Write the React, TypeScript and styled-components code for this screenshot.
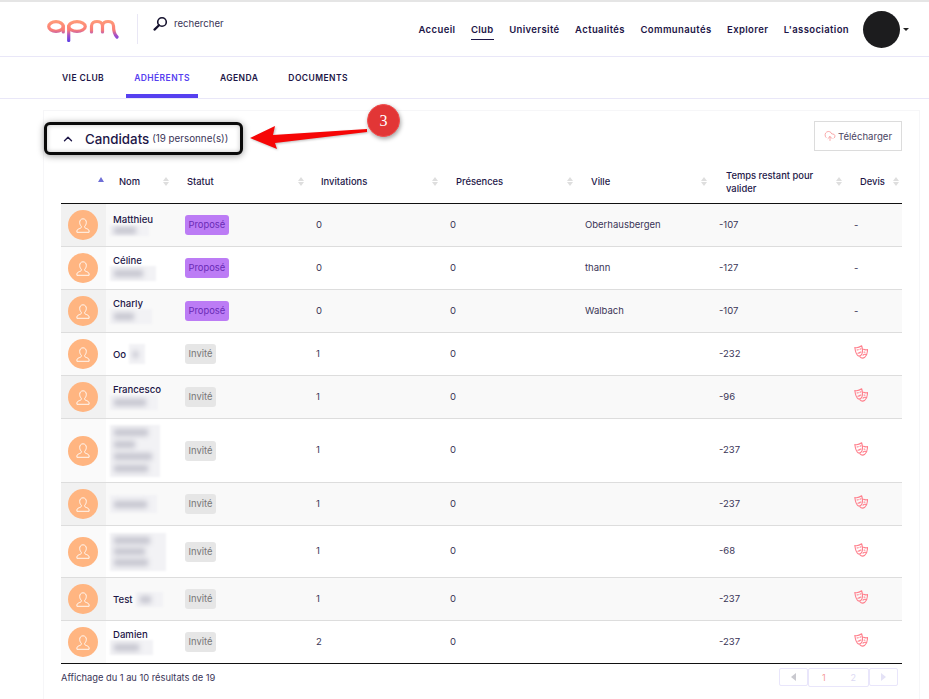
import React from "react";
import styled, { createGlobalStyle } from "styled-components";
import { ChevronUp, CloudUpload } from "lucide-react";

const Global = createGlobalStyle`
  html, body { margin: 0; padding: 0; background: #fff; }
  body { font-family: Inter, "Open Sans", sans-serif; color: #1d1647; }
  * { box-sizing: border-box; }
`;

const Page = styled.div`
  width: 929px;
  height: 699px;
  overflow: hidden;
  border-top: 2px solid #e5e5e5;
  display: flex;
  flex-direction: column;
`;

const Header = styled.header`
  height: 55px;
  flex: none;
  border-bottom: 1px solid #e9e7f8;
  display: flex;
  align-items: center;
  padding: 0 20px 0 47px;
`;

const LogoBox = styled.div`
  width: 91px;
  height: 30px;
  border-right: 1px solid #e9e7f5;
  display: flex;
  align-items: center;
  flex: none;
`;

const SearchBox = styled.div`
  display: flex;
  align-items: flex-start;
  gap: 6px;
  margin-left: 15px;
  height: 30px;
  font-size: 9.6px;
  color: #3a3557;
  padding-top: 2px;
`;

const SearchLabel = styled.span`
  line-height: 14px;
  margin-top: 1px;
`;

const Nav = styled.nav`
  margin-left: auto;
  display: flex;
  align-items: center;
  gap: 15.5px;
`;

const NavItem = styled.a<{ $active?: boolean }>`
  font-size: 9.5px;
  font-weight: 600;
  letter-spacing: 0.38px;
  color: #1d1647;
  padding: 4px 0;
  position: relative;
  top: 1px;
  border-bottom: 1px solid ${(p) => (p.$active ? "#1d1647" : "transparent")};
`;

const UserArea = styled.div`
  margin-left: 14px;
  display: flex;
  align-items: center;
  gap: 3px;
`;

const UserAvatar = styled.div`
  width: 37px;
  height: 37px;
  border-radius: 50%;
  background: #1c1c1e;
`;

const Caret = styled.span`
  width: 0;
  height: 0;
  border-left: 3px solid transparent;
  border-right: 3px solid transparent;
  border-top: 3px solid #222;
`;

const Tabs = styled.div`
  height: 42px;
  flex: none;
  border-bottom: 1px solid #e9e7f8;
  display: flex;
  padding-left: 54px;
`;

const Tab = styled.a<{ $active?: boolean }>`
  height: 41px;
  padding: 15px 8px 0;
  margin-right: 14px;
  font-size: 8.5px;
  font-weight: 600;
  letter-spacing: 0.42px;
  line-height: 12px;
  color: ${(p) => (p.$active ? "#5640f0" : "#1d1647")};
  border-bottom: 4px solid ${(p) => (p.$active ? "#5640f0" : "transparent")};
`;

const Card = styled.section`
  position: relative;
  margin: 11px 0 0 43px;
  width: 877px;
  flex: 1;
  border: 1px solid #f6f6f8;
  border-bottom: 0;
  padding: 0 17px;
`;

const CardTop = styled.div`
  display: flex;
  justify-content: space-between;
  align-items: flex-start;
  height: 49px;
  padding-top: 10px;
`;

const TitleBox = styled.div`
  margin-left: -17px;
  margin-top: 1px;
  width: 199px;
  height: 33px;
  border: 3px solid #0a0a0a;
  border-radius: 6px;
  box-shadow: 0 1px 7px rgba(0, 0, 0, 0.4), inset 0 0 5px rgba(0, 0, 0, 0.22);
  display: flex;
  align-items: center;
  padding-left: 14px;
  background: #fff;
`;

const Title = styled.span`
  font-size: 13.3px;
  font-weight: 500;
  margin-left: 10px;
  color: #1d1647;
`;

const TitleCount = styled.span`
  font-size: 9.8px;
  margin-left: 3px;
  color: #3a3557;
`;

const DownloadButton = styled.button`
  width: 88px;
  height: 30px;
  border: 1px solid #dcdcdc;
  background: #fff;
  display: flex;
  align-items: center;
  justify-content: center;
  gap: 2px;
  font-family: inherit;
  font-size: 9.6px;
  color: #4a4563;
  padding: 0;
`;

const Table = styled.table`
  width: 841px;
  table-layout: fixed;
  border-collapse: separate;
  border-spacing: 0;
`;

const Th = styled.th<{ $pad?: number; $padR?: number }>`
  height: 44px;
  border-bottom: 1px solid #111;
  padding: 0 ${(p) => p.$padR ?? 6}px 0 ${(p) => p.$pad ?? 11}px;
  font-size: 9.4px;
  font-weight: 500;
  line-height: 13px;
  text-align: left;
  color: #1d1647;
`;

const ThInner = styled.div`
  display: flex;
  align-items: center;
  justify-content: space-between;
`;

const Sort = styled.span`
  display: inline-flex;
  flex-direction: column;
  gap: 1px;
  flex: none;
  &::before, &::after {
    content: "";
    width: 0;
    height: 0;
    border-left: 3px solid transparent;
    border-right: 3px solid transparent;
  }
  &::before { border-bottom: 4px solid #dedede; }
  &::after { border-top: 4px solid #dedede; }
`;

const SortActive = styled.span`
  display: block;
  margin: -4px -4px 0 auto;
  width: 0;
  height: 0;
  border-left: 3px solid transparent;
  border-right: 3px solid transparent;
  border-bottom: 5px solid #6f6fd6;
`;

const Tr = styled.tr<{ $h: number }>`
  height: ${(p) => p.$h}px;
  &:nth-child(odd) td { background: #f9f9f9; }
  &:nth-child(odd) td:first-child { background: #f1f1f1; }
  &:nth-child(even) td:first-child { background: #fafafa; }
  &:last-child td { border-bottom-color: #111; }
`;

const Td = styled.td<{ $pad?: number }>`
  border-bottom: 1px solid #dddddd;
  padding: 0 0 0 ${(p) => p.$pad ?? 6}px;
  font-size: 9.5px;
  color: #3a3557;
  vertical-align: middle;
`;

const TextCell = styled(Td)`
  padding-bottom: 2px;
`;

const Avatar = styled.div`
  width: 30px;
  height: 30px;
  border-radius: 50%;
  background: #ffb581;
  margin-left: 1px;
  display: flex;
  align-items: center;
  justify-content: center;
`;

const Name = styled.div<{ $inline?: boolean }>`
  font-size: 9.6px;
  font-weight: 500;
  line-height: 11px;
  color: #1d1647;
  display: ${(p) => (p.$inline ? "flex" : "block")};
  align-items: center;
  gap: 2px;
`;

const Blur = styled.div<{ $w: number; $h: number }>`
  width: ${(p) => p.$w}px;
  height: ${(p) => p.$h}px;
  margin-left: -3px;
  background: #f2f2f5;
  filter: blur(0.8px);
  overflow: hidden;
  display: flex;
  flex-direction: column;
  justify-content: space-evenly;
  padding: 0 4px;
`;

const BlurLine = styled.div<{ $w: number }>`
  width: ${(p) => p.$w}%;
  height: 7px;
  background: #c4c4ce;
  filter: blur(2.5px);
`;

const InlineBlur = styled(Blur)`
  margin-left: 1px;
`;

const Badge = styled.span<{ $kind: "proposed" | "invited" }>`
  display: inline-block;
  height: 20px;
  line-height: 20px;
  padding: 0 3.5px;
  border-radius: 3px;
  font-size: 9.4px;
  background: ${(p) => (p.$kind === "proposed" ? "#bc7cf5" : "#e6e6e6")};
  color: ${(p) => (p.$kind === "proposed" ? "#6a2bb5" : "#777")};
`;

const MasksWrap = styled.span`
  display: inline-flex;
`;

const Footer = styled.div`
  width: 841px;
  display: flex;
  justify-content: space-between;
  padding: 4px 4px 0 0;
`;

const FooterText = styled.span`
  font-size: 9.3px;
  line-height: 18px;
  margin-top: 1px;
  color: #3a3557;
`;

const Pagination = styled.div`
  display: flex;
  align-items: flex-start;
`;

const PageArrow = styled.span`
  width: 29px;
  height: 18px;
  border: 1px solid #e9e6fb;
  border-radius: 2px;
  display: flex;
  align-items: center;
  justify-content: center;
`;

const ArrowGlyph = styled.span<{ $dir: "l" | "r" }>`
  width: 0;
  height: 0;
  border-top: 4px solid transparent;
  border-bottom: 4px solid transparent;
  ${(p) => (p.$dir === "l" ? "border-right: 5px solid #c9c9cf;" : "border-left: 5px solid #e4e2f6;")}
`;

const PageNumbers = styled.span`
  width: 61px;
  height: 19px;
  border: 1px solid #e9e6fb;
  border-radius: 2px;
  display: flex;
  align-items: center;
  font-size: 9px;
`;

const PageNumber = styled.span<{ $active?: boolean }>`
  width: 50%;
  text-align: center;
  color: ${(p) => (p.$active ? "#f59a9a" : "#dcdaf3")};
`;

const Marker = styled.div`
  position: absolute;
  left: 323px;
  top: -7px;
  width: 33px;
  height: 33px;
  border-radius: 50%;
  background: #e23636;
  border: 1px solid #f24a4a;
  box-shadow: 1px 2px 4px rgba(0, 0, 0, 0.35);
  color: #fff;
  font-family: "Liberation Serif", serif;
  font-size: 16px;
  display: flex;
  align-items: center;
  justify-content: center;
`;

const ArrowSvg = styled.svg`
  position: absolute;
  left: 205px;
  top: 10px;
  filter: drop-shadow(1px 1px 1px rgba(0, 0, 0, 0.25));
`;

const Logo = () => (
  <svg width="72" height="26" viewBox="0 0 72 26" fill="none">
    <defs>
      <linearGradient id="lg" x1="0" y1="4" x2="0" y2="26" gradientUnits="userSpaceOnUse">
        <stop offset="0" stopColor="#ff9d78" />
        <stop offset="0.45" stopColor="#fb7d76" />
        <stop offset="0.7" stopColor="#a450c8" />
        <stop offset="1" stopColor="#5a3ee6" />
      </linearGradient>
    </defs>
    <g stroke="url(#lg)" strokeWidth="3.2" strokeLinecap="round" strokeLinejoin="round">
      <ellipse cx="9" cy="10.500" rx="7.300" ry="4.800" />
      <path d="M16.300 10v6" />
      <ellipse cx="30" cy="10.500" rx="8.300" ry="4.800" />
      <path d="M21.700 10v14.500" />
      <path d="M44.500 16V10c0-6 11-6 11 0v6M55.500 10c0-6 11-6 11 0 0 4 .5 8 3.500 11" />
    </g>
  </svg>
);

const SearchIcon = () => (
  <svg width="15" height="15" viewBox="0 0 15 15" fill="none">
    <circle cx="9" cy="6" r="4.3" stroke="#15122e" strokeWidth="1.6" />
    <path d="M6 9.200 1.500 13.600" stroke="#15122e" strokeWidth="2.200" strokeLinecap="round" />
  </svg>
);

const UserIcon = () => (
  <svg width="14" height="15" viewBox="0 0 14 15" fill="none" stroke="#fff" strokeWidth="0.9" strokeLinejoin="round">
    <path d="M7 .8C4.900.8 3.700 2.400 3.700 4.400c0 1.700.8 3.100 1.600 3.900.2.8 0 1.500-.8 1.900-1.700.7-3.600 1.200-3.600 2.700v1.400h12.200v-1.400c0-1.500-1.900-2-3.600-2.700-.8-.4-1-1.100-.8-1.900.8-.8 1.600-2.200 1.600-3.900C10.300 2.400 9.100.8 7 .8Z" />
  </svg>
);

const MasksIcon = () => (
  <svg width="14" height="14" viewBox="0 0 14 14" fill="none" stroke="#ff7f8c" strokeWidth="1.1" strokeLinecap="round" strokeLinejoin="round">
    <path d="M.8 2.500C3 3 5.500 2.400 7.700.8c1 3 1.100 6 .2 8.200-.7 1.500-2.200 2.200-3.600 1.900C2.500 10 1.300 6 .8 2.500Z" />
    <path d="M3 5l1.300-.3M6 4.200l1-.4M3.800 8.200c1-.1 2-.5 2.800-1.200" />
    <path d="M9.500 4.300c1.300.6 2.800.7 4 .2 0 3.200-.8 6-2.700 7.700-1.600 1.200-3.700 1-5-.5" />
    <path d="M10 7l1 .2M9 10.200c.7-.7 1.700-1 2.500-.8" />
  </svg>
);

type Row = {
  name?: string;
  inline?: [number, number];
  blur?: [number, number, number[]];
  status: "Proposé" | "Invité";
  inv: string;
  city?: string;
  time: string;
  h: number;
};

const rows: Row[] = [
  { name: "Matthieu", blur: [39, 11, [70]], status: "Proposé", inv: "0", city: "Oberhausbergen", time: "-107", h: 43 },
  { name: "Céline", blur: [46, 15, [75]], status: "Proposé", inv: "0", city: "thann", time: "-127", h: 43 },
  { name: "Charly", blur: [42, 15, [60]], status: "Proposé", inv: "0", city: "Walbach", time: "-107", h: 43 },
  { name: "Oo", inline: [16, 20], status: "Invité", inv: "1", time: "-232", h: 43 },
  { name: "Francesco", blur: [48, 15, [80]], status: "Invité", inv: "1", time: "-96", h: 43 },
  { blur: [50, 52, [80, 50, 90, 80]], status: "Invité", inv: "1", time: "-237", h: 64 },
  { blur: [47, 18, [85]], status: "Invité", inv: "1", time: "-237", h: 43 },
  { blur: [56, 38, [75, 65, 70]], status: "Invité", inv: "1", time: "-68", h: 52 },
  { name: "Test", inline: [27, 15], status: "Invité", inv: "1", time: "-237", h: 43 },
  { name: "Damien", blur: [43, 15, [70]], status: "Invité", inv: "2", time: "-237", h: 43 },
];

const BlurBlock = ({ w, h, lines }: { w: number; h: number; lines: number[] }) => (
  <Blur $w={w} $h={h}>
    {lines.map((l, i) => (
      <BlurLine key={i} $w={l} />
    ))}
  </Blur>
);

const HeadCell = ({ label, pad, padR }: { label: string; pad?: number; padR?: number }) => (
  <Th $pad={pad} $padR={padR}>
    <ThInner>
      <span>{label}</span>
      <Sort />
    </ThInner>
  </Th>
);

export default function App() {
  return (
    <Page>
      <Global />
      <Header>
        <LogoBox>
          <Logo />
        </LogoBox>
        <SearchBox>
          <SearchIcon />
          <SearchLabel>rechercher</SearchLabel>
        </SearchBox>
        <Nav>
          <NavItem>Accueil</NavItem>
          <NavItem $active>Club</NavItem>
          <NavItem>Université</NavItem>
          <NavItem>Actualités</NavItem>
          <NavItem>Communautés</NavItem>
          <NavItem>Explorer</NavItem>
          <NavItem>L'association</NavItem>
        </Nav>
        <UserArea>
          <UserAvatar />
          <Caret />
        </UserArea>
      </Header>
      <Tabs>
        <Tab>VIE CLUB</Tab>
        <Tab $active>ADHÉRENTS</Tab>
        <Tab>AGENDA</Tab>
        <Tab>DOCUMENTS</Tab>
      </Tabs>
      <Card>
        <CardTop>
          <TitleBox>
            <ChevronUp size={14} strokeWidth={2.4} color="#1d1647" />
            <Title>Candidats</Title>
            <TitleCount>(19 personne(s))</TitleCount>
          </TitleBox>
          <DownloadButton>
            <CloudUpload size={12} color="#f58d8d" strokeWidth={1.5} />
            Télécharger
          </DownloadButton>
        </CardTop>
        <Table>
          <colgroup>
            <col width={45} />
            <col width={69} />
            <col width={135} />
            <col width={134} />
            <col width={135} />
            <col width={134} />
            <col width={135} />
            <col width={54} />
          </colgroup>
          <thead>
            <tr>
              <Th $pad={0}>
                <SortActive />
              </Th>
              <HeadCell label="Nom" pad={13} />
              <HeadCell label="Statut" pad={12} />
              <HeadCell label="Invitations" />
              <HeadCell label="Présences" pad={12} />
              <HeadCell label="Ville" pad={12} />
              <HeadCell label="Temps restant pour valider" pad={13} />
              <HeadCell label="Devis" pad={12} padR={3} />
            </tr>
          </thead>
          <tbody>
            {rows.map((r, i) => (
              <Tr key={i} $h={r.h}>
                <Td>
                  <Avatar>
                    <UserIcon />
                  </Avatar>
                </Td>
                <Td $pad={7}>
                  {r.inline ? (
                    <Name $inline>
                      {r.name}
                      <InlineBlur $w={r.inline[0]} $h={r.inline[1]}>
                        <BlurLine $w={60} />
                      </InlineBlur>
                    </Name>
                  ) : (
                    <>
                      {r.name && <Name>{r.name}</Name>}
                      {r.blur && <BlurBlock w={r.blur[0]} h={r.blur[1]} lines={r.blur[2]} />}
                    </>
                  )}
                </Td>
                <Td $pad={10}>
                  <Badge $kind={r.status === "Proposé" ? "proposed" : "invited"}>{r.status}</Badge>
                </Td>
                <TextCell>{r.inv}</TextCell>
                <TextCell>0</TextCell>
                <TextCell>{r.city}</TextCell>
                <TextCell>{r.time}</TextCell>
                <TextCell>
                  {r.status === "Invité" ? (
                    <MasksWrap>
                      <MasksIcon />
                    </MasksWrap>
                  ) : (
                    "-"
                  )}
                </TextCell>
              </Tr>
            ))}
          </tbody>
        </Table>
        <Footer>
          <FooterText>Affichage du 1 au 10 résultats de 19</FooterText>
          <Pagination>
            <PageArrow>
              <ArrowGlyph $dir="l" />
            </PageArrow>
            <PageNumbers>
              <PageNumber $active>1</PageNumber>
              <PageNumber>2</PageNumber>
            </PageNumbers>
            <PageArrow>
              <ArrowGlyph $dir="r" />
            </PageArrow>
          </Pagination>
        </Footer>
        <ArrowSvg width="130" height="30" viewBox="0 0 130 30">
          <path d="M1 17 26 5l-2 9 94-6v3l-92 11 2 6Z" fill="#f60606" />
        </ArrowSvg>
        <Marker>3</Marker>
      </Card>
    </Page>
  );
}
